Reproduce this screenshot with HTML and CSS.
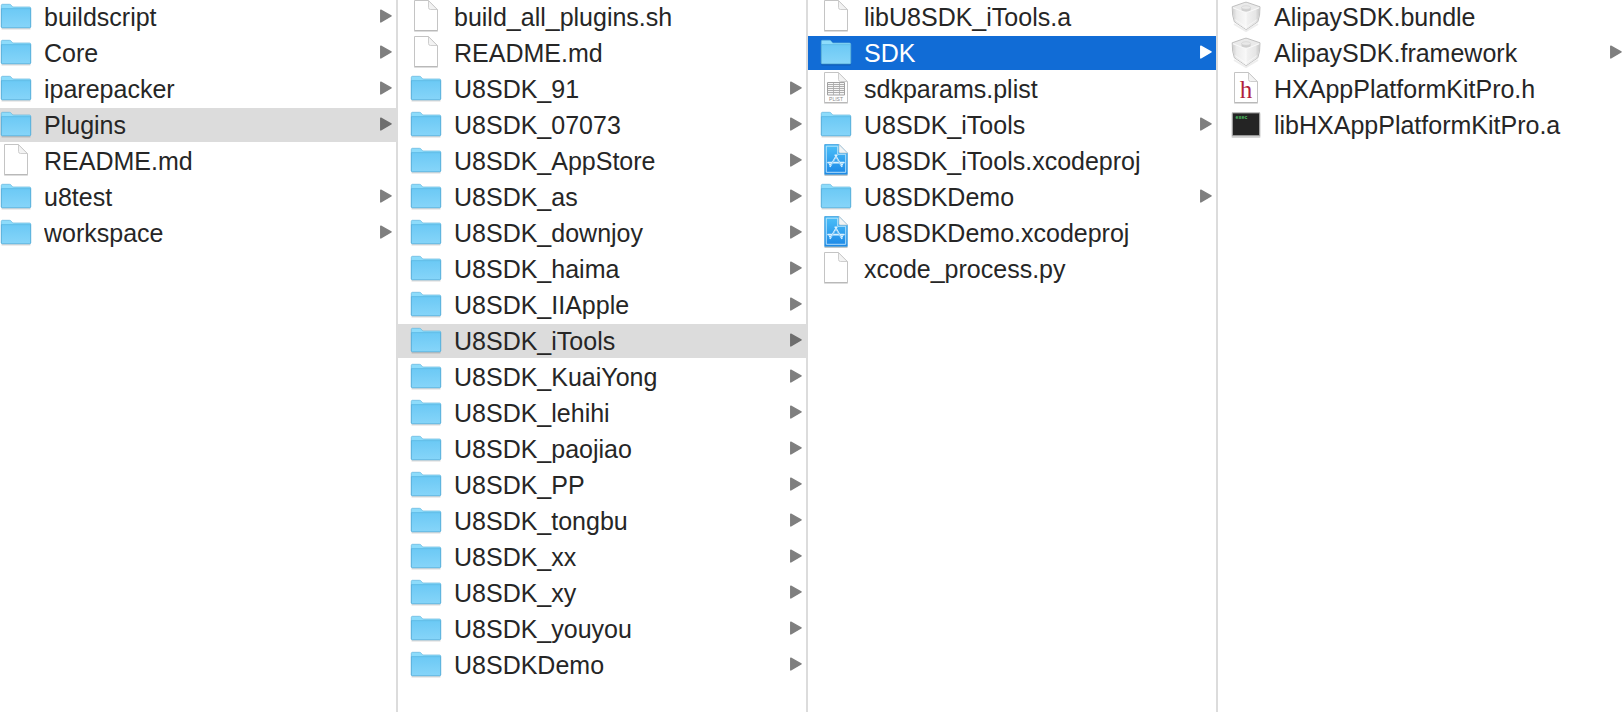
FILE: index.html
```html
<!DOCTYPE html>
<html lang="en">
<head>
<meta charset="utf-8">
<title>Plugins</title>
<link rel="stylesheet" href="styles.css">
<script src="browser.js" defer></script>
</head>
<body>
<svg class="sprite" aria-hidden="true">
  <defs>
    <linearGradient id="folder-fill" x1="0" y1="0" x2="0" y2="1">
      <stop offset="0" stop-color="#6cc9f5"/><stop offset="1" stop-color="#86d5f9"/>
    </linearGradient>
    <linearGradient id="xcode-fill" x1="0" y1="0" x2="0" y2="1">
      <stop offset="0" stop-color="#4cc0f8"/><stop offset="1" stop-color="#1b87e6"/>
    </linearGradient>
    <linearGradient id="brick-left" x1="0" y1="0" x2="1" y2="0">
      <stop offset="0" stop-color="#cfcfcf"/><stop offset=".3" stop-color="#ececec"/><stop offset="1" stop-color="#f8f8f8"/>
    </linearGradient>
    <linearGradient id="brick-right" x1="1" y1="0" x2="0" y2="0">
      <stop offset="0" stop-color="#c8c8c8"/><stop offset=".3" stop-color="#e6e6e6"/><stop offset="1" stop-color="#f2f2f2"/>
    </linearGradient>
  </defs>
  <symbol id="folder" viewBox="0 0 32 34">
    <path d="M1.500 28.800H30.500" stroke="#000" stroke-opacity=".14" stroke-width="1.500"/>
    <path d="M1.300 27V5.500Q1.300 4.300 2.500 4.300H9.600Q10.500 4.300 11.200 5.200L12.200 6.400Q12.700 7 13.800 7H29.500Q30.700 7 30.700 8.200V27Z" fill="#8ddcfb" stroke="#62b4dc" stroke-width=".7"/>
    <path d="M1.300 8.800H30.700V27Q30.700 28 29.700 28H2.300Q1.300 28 1.300 27Z" fill="url(#folder-fill)"/>
    <path d="M1.400 8.600H30.600" stroke="#59b6e2" stroke-width=".8"/>
    <path d="M1.400 8.500V27Q1.400 27.800 2.300 27.800H29.700Q30.600 27.800 30.600 27V8.500" fill="none" stroke="#51a7d3" stroke-width=".7"/>
  </symbol>
  <symbol id="page" viewBox="0 0 32 34">
    <path d="M4.500 .5H18.500L27.500 9.500V30.500H4.500Z" fill="#fff" stroke="#c4c4c4"/>
    <path d="M4.200 31H27.800" stroke="#aaa" stroke-width=".8"/>
    <path d="M18.500 .7V7.500Q18.500 9.500 20.500 9.500H27.300Z" fill="#f3f3f3" stroke="#c8c8c8" stroke-width=".9"/>
  </symbol>
  <symbol id="xcode" viewBox="0 0 32 34">
    <path d="M4.700 .6H19L27.300 9V30.400H4.700Z" fill="url(#xcode-fill)" stroke="#3a9bdc" stroke-width=".8"/>
    <path d="M4.500 31.200H27.500" stroke="#8f9aa3" stroke-width=".8"/>
    <path d="M6.300 2.200H17.700V10.300H25.700V28.300H6.300Z" fill="none" stroke="#c4e8fd" stroke-width=".9"/>
    <path d="M19 .4V7.500Q19 9 20.500 9H27.500Z" fill="#f2f4f5" stroke="#bcc6cc" stroke-width=".7"/>
    <path d="M16.800 11.200L10.200 22.300M15.200 11.200L21.800 22.300M8 18.600H24M9.700 20.500L11 21.300M21 21.300L22.300 20.500" fill="none" stroke="#d9f1ff" stroke-width="1.600" stroke-linecap="round"/>
    <path d="M16 13.500L10.700 21.800M16 13.500L21.300 21.800" fill="none" stroke="#3aa2ee" stroke-width=".5"/>
  </symbol>
  <symbol id="brick" viewBox="0 0 32 34">
    <path d="M4 24L16 31L28 24" fill="none" stroke="#000" stroke-opacity=".07" stroke-width="2"/>
    <path d="M2.200 6.800L14.800 2.400Q16 2 17.200 2.400L30 6.800Q30.200 16 27.800 21.800L16.200 29.600L4.400 21.800Q2 16 2.200 6.800Z" fill="#eaeaea" stroke="#b9b9b9" stroke-width=".9" stroke-linejoin="round"/>
    <path d="M2.700 8L16.100 13V29.200L4.800 21.500Q2.700 15 2.700 8Z" fill="url(#brick-left)"/>
    <path d="M16.100 13L29.500 8Q29.500 15 27.400 21.500L16.100 29.200Z" fill="url(#brick-right)"/>
    <path d="M3 7.800L16.100 12.800L29.200 7.800" fill="none" stroke="#fbfbfb" stroke-width=".9"/>
    <path d="M16.100 13V29" stroke="#fff" stroke-width=".8" opacity=".8"/>
    <path d="M5 19.500L16.100 27L27.200 19.500" fill="none" stroke="#fff" stroke-width="1" opacity=".5"/>
    <path d="M11.500 7.500V9.800C11.500 12 20.700 12 20.700 9.800V7.500Z" fill="#cfcfcf"/>
    <ellipse cx="16.100" cy="7.500" rx="4.600" ry="1.800" fill="#e9e9e9" stroke="#cecece" stroke-width=".6"/>
  </symbol>
  <symbol id="arrow" viewBox="0 0 12 34">
    <path d="M.8 10.200L11 15.900L.8 21.900Z" fill="currentColor" stroke="currentColor" stroke-width="1.500" stroke-linejoin="round"/>
  </symbol>
</svg>
<main class="browser" id="browser" aria-label="File browser"></main>
</body>
</html>
```
FILE: styles.css
```css
* {
  box-sizing: border-box;
}

body {
  margin: 0;
  background: #fff;
  color: #262626;
  font-family: "Liberation Sans", Arial, sans-serif;
}

.sprite {
  position: absolute;
  width: 0;
  height: 0;
}

.browser {
  display: grid;
  grid-template-columns: 398fr 410fr 410fr 406fr;
  min-height: 100vh;
}

.column {
  display: flex;
  flex-direction: column;
  gap: 2px;
  min-width: 0;
  margin: 0;
  padding: 0;
  list-style: none;
  border-right: 2px solid #dcdcdc;
}

.column:last-child {
  border-right: 0;
}

.row {
  display: flex;
  align-items: center;
  width: 100%;
  height: 34px;
  padding: 0 4px 0 12px;
  border: 0;
  background: transparent;
  color: inherit;
  font-family: inherit;
  font-size: 25px;
  line-height: 34px;
  text-align: left;
}

.column:first-child .row {
  padding-left: 0;
}

.column:last-child .row {
  padding-right: 2px;
}

.name {
  flex: 1;
  min-width: 0;
  margin-left: 12px;
  overflow: hidden;
  white-space: nowrap;
}

.icon {
  flex: none;
  width: 32px;
  height: 34px;
}

.arrow {
  flex: none;
  width: 12px;
  height: 34px;
  color: #7f7f7f;
}

.row.open {
  background: #dcdcdc;
}

.row.open .arrow {
  color: #6e6e6e;
}

.row.selected {
  background: #116cd6;
  color: #fff;
}

.row.selected .arrow {
  color: #fff;
}

.plist-text {
  fill: #8c8c8c;
  font: 5px "Liberation Sans", sans-serif;
  text-anchor: middle;
}

.header-text {
  fill: #b01f3e;
  font: 25px "Liberation Serif", serif;
  text-anchor: middle;
}

.exec-text {
  fill: #4fc464;
  font: bold 5px "Liberation Mono", monospace;
}
```
FILE: browser.js
```js
// Each entry: [name, icon, has children, state]
const columns = [
  [
    ["buildscript", "folder", true],
    ["Core", "folder", true],
    ["iparepacker", "folder", true],
    ["Plugins", "folder", true, "open"],
    ["README.md", "page", false],
    ["u8test", "folder", true],
    ["workspace", "folder", true]
  ],
  [
    ["build_all_plugins.sh", "page", false],
    ["README.md", "page", false],
    ["U8SDK_91", "folder", true],
    ["U8SDK_07073", "folder", true],
    ["U8SDK_AppStore", "folder", true],
    ["U8SDK_as", "folder", true],
    ["U8SDK_downjoy", "folder", true],
    ["U8SDK_haima", "folder", true],
    ["U8SDK_IIApple", "folder", true],
    ["U8SDK_iTools", "folder", true, "open"],
    ["U8SDK_KuaiYong", "folder", true],
    ["U8SDK_lehihi", "folder", true],
    ["U8SDK_paojiao", "folder", true],
    ["U8SDK_PP", "folder", true],
    ["U8SDK_tongbu", "folder", true],
    ["U8SDK_xx", "folder", true],
    ["U8SDK_xy", "folder", true],
    ["U8SDK_youyou", "folder", true],
    ["U8SDKDemo", "folder", true]
  ],
  [
    ["libU8SDK_iTools.a", "page", false],
    ["SDK", "folder", true, "selected"],
    ["sdkparams.plist", "plist", false],
    ["U8SDK_iTools", "folder", true],
    ["U8SDK_iTools.xcodeproj", "xcode", false],
    ["U8SDKDemo", "folder", true],
    ["U8SDKDemo.xcodeproj", "xcode", false],
    ["xcode_process.py", "page", false]
  ],
  [
    ["AlipaySDK.bundle", "brick", false],
    ["AlipaySDK.framework", "brick", true],
    ["HXAppPlatformKitPro.h", "header", false],
    ["libHXAppPlatformKitPro.a", "exec", false]
  ]
];

// Icons that carry lettering are drawn in place rather than from the sprite.
const lettered = {
  plist: `<use href="#page"/>
    <path d="M7.500 10.500H24.500V23H7.500Z" fill="#f6f6f6" stroke="#a2a2a2"/>
    <path d="M8 12.500H24M8 14.500H24M8 16.500H24M8 18.500H24M8 20.500H24" stroke="#a6a6a6" stroke-width=".9"/>
    <path d="M13.500 11V23M19.500 11V23" stroke="#aaa" stroke-width=".8"/>
    <text x="16" y="28.800" class="plist-text">PLIST</text>`,
  header: `<use href="#page"/><text x="16" y="26" class="header-text">h</text>`,
  exec: `<rect x="1.500" y="5" width="29" height="25" rx="1" fill="#000" opacity=".16"/>
    <rect x="2.400" y="4.900" width="27.200" height="22.800" fill="#242424" stroke="#a5a5a5"/>
    <text x="5.500" y="11" class="exec-text">exec</text>`
};

const icon = id =>
  `<svg class="icon" viewBox="0 0 32 34" aria-hidden="true">${lettered[id] || `<use href="#${id}"/>`}</svg>`;

const arrow = `<svg class="arrow" viewBox="0 0 12 34" aria-hidden="true"><use href="#arrow"/></svg>`;

const row = ([name, kind, children, state]) =>
  `<li><button type="button" class="row ${state || ""}">${icon(kind)}<span class="name">${name}</span>${children ? arrow : ""}</button></li>`;

document.getElementById("browser").innerHTML = columns
  .map(rows => `<ul class="column">${rows.map(row).join("")}</ul>`)
  .join("");
```
